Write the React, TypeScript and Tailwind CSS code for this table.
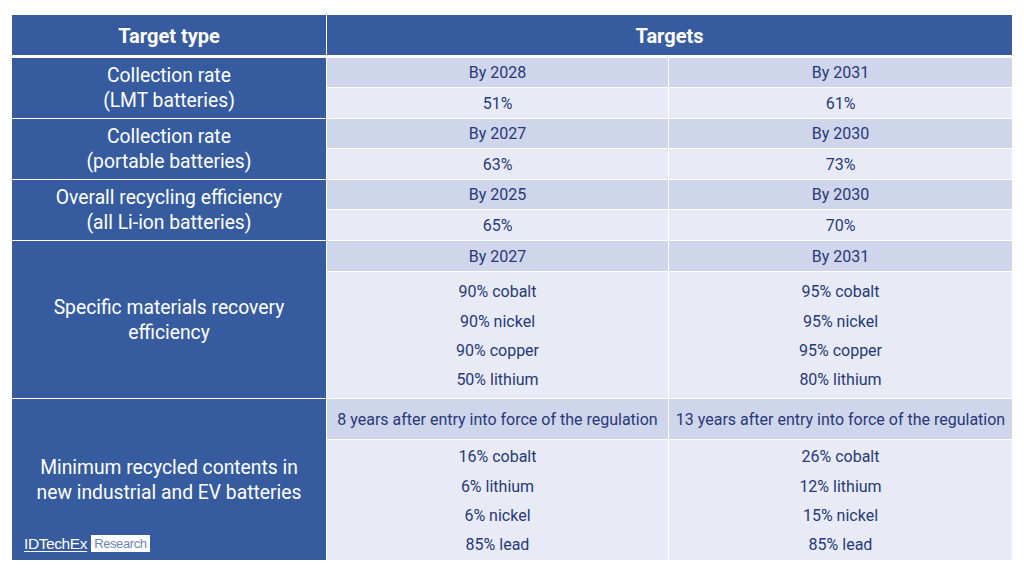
import React from 'react'

const blue = 'bg-[#365c9f] text-white'
const dark = 'bg-[#cfd5ea] text-[#27397a]'
const light = 'bg-[#e8ebf5] text-[#27397a]'

function Label({ children, row }: { children: React.ReactNode; row: string }) {
  return (
    <div className={`${blue} ${row} col-start-1 flex items-center justify-center text-center text-[19.3px] leading-[25px]`}>
      <div>{children}</div>
    </div>
  )
}

function Cell({ children, tone }: { children: React.ReactNode; tone: string }) {
  return <div className={`${tone} flex items-center justify-center text-center text-[16px] pt-px`}>{children}</div>
}

function List({ items }: { items: string[] }) {
  return (
    <div className={`${light} flex flex-col items-center justify-center text-[16px] leading-[29.3px] pt-[2px]`}>
      {items.map((t) => (
        <div key={t}>{t}</div>
      ))}
    </div>
  )
}

export default function App() {
  return (
    <main className="w-[1024px] h-[576px] bg-white pt-[15px] pl-[12px]" style={{ fontFamily: 'Roboto, "Liberation Sans", sans-serif' }}>
      <div className="w-[1000px]">
        <div className="grid grid-cols-[314px_685px] gap-x-px h-[40px] text-[20px] font-bold">
          <div className={`${blue} flex items-center justify-center pt-[2px]`}>Target type</div>
          <div className={`${blue} flex items-center justify-center pt-[2px]`}>Targets</div>
        </div>
        <div className="mt-[3px] grid grid-cols-[314px_341px_343px] grid-rows-[29px_30px_29px_30px_29px_30px_30px_126px_40px_120px] gap-px">
          <Label row="row-span-2">
            Collection rate
            <br />
            (LMT batteries)
          </Label>
          <Cell tone={dark}>By 2028</Cell>
          <Cell tone={dark}>By 2031</Cell>
          <Cell tone={light}>51%</Cell>
          <Cell tone={light}>61%</Cell>

          <Label row="row-span-2">
            Collection rate
            <br />
            (portable batteries)
          </Label>
          <Cell tone={dark}>By 2027</Cell>
          <Cell tone={dark}>By 2030</Cell>
          <Cell tone={light}>63%</Cell>
          <Cell tone={light}>73%</Cell>

          <Label row="row-span-2">
            Overall recycling efficiency
            <br />
            (all Li-ion batteries)
          </Label>
          <Cell tone={dark}>By 2025</Cell>
          <Cell tone={dark}>By 2030</Cell>
          <Cell tone={light}>65%</Cell>
          <Cell tone={light}>70%</Cell>

          <Label row="row-span-2">
            Specific materials recovery
            <br />
            efficiency
          </Label>
          <Cell tone={dark}>By 2027</Cell>
          <Cell tone={dark}>By 2031</Cell>
          <List items={['90% cobalt', '90% nickel', '90% copper', '50% lithium']} />
          <List items={['95% cobalt', '95% nickel', '95% copper', '80% lithium']} />

          <div className={`${blue} row-span-2 col-start-1 relative flex items-center justify-center text-center text-[19.3px] leading-[25px]`}>
            <div>
              Minimum recycled contents in
              <br />
              new industrial and EV batteries
            </div>
            <div className="absolute left-[12px] bottom-[8px] flex items-center gap-[4px]">
              <span
                className="text-[15.5px] leading-[17px] text-white underline underline-offset-2 tracking-[-0.4px]"
                style={{ fontFamily: '"Liberation Sans", Arial, sans-serif' }}
              >
                IDTechEx
              </span>
              <span
                className="bg-white text-[#6b86b8] text-[13px] leading-[17px] px-[3px] tracking-[-0.4px]"
                style={{ fontFamily: '"Liberation Sans", Arial, sans-serif' }}
              >
                Research
              </span>
            </div>
          </div>
          <Cell tone={dark}>8 years after entry into force of the regulation</Cell>
          <Cell tone={dark}>13 years after entry into force of the regulation</Cell>
          <List items={['16% cobalt', '6% lithium', '6% nickel', '85% lead']} />
          <List items={['26% cobalt', '12% lithium', '15% nickel', '85% lead']} />
        </div>
      </div>
    </main>
  )
}
